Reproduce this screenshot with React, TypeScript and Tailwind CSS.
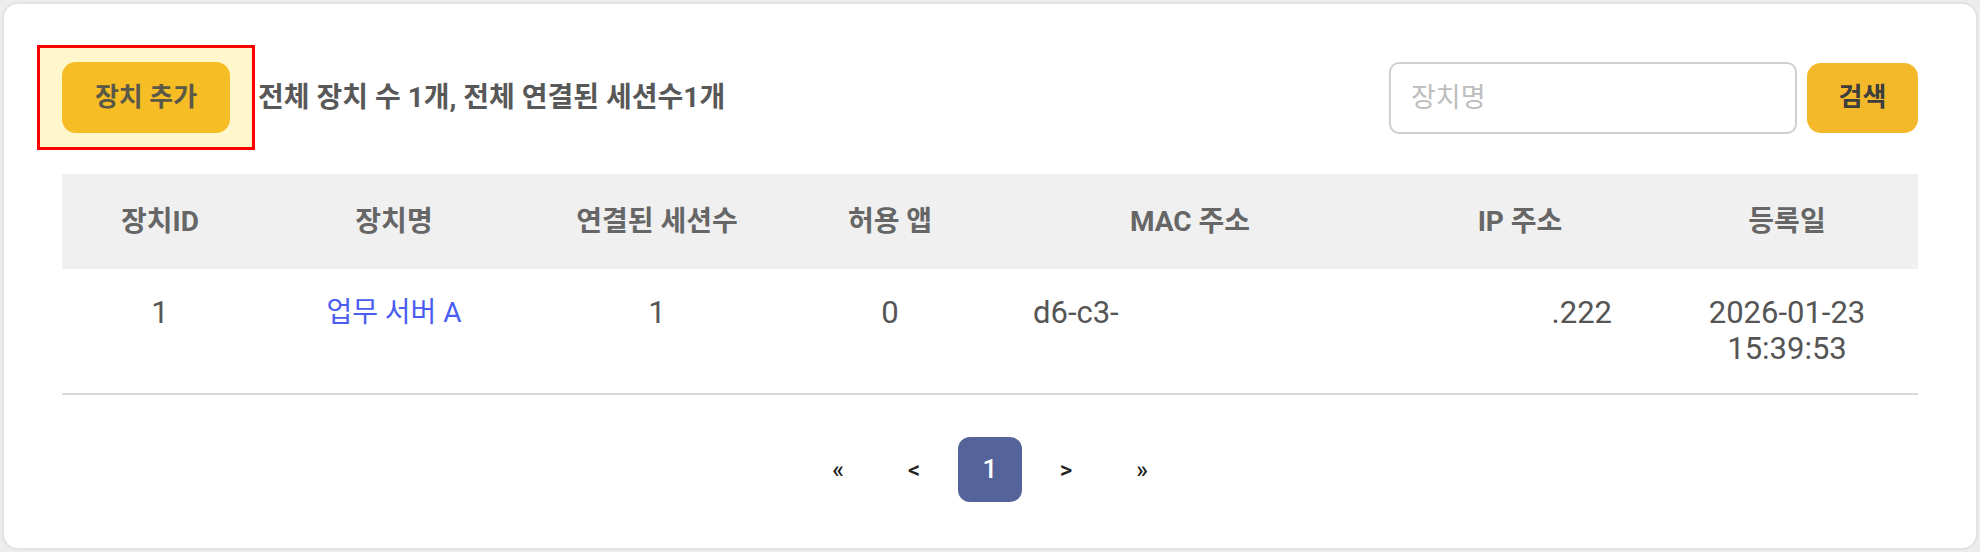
import React from 'react'

const columns = ['장치ID', '장치명', '연결된 세션수', '허용 앱', 'MAC 주소', 'IP 주소', '등록일']

const gridCols = 'grid grid-cols-[196px_272px_254px_212px_388px_272px_262px]'

export default function App() {
  return (
    <div className="min-h-screen bg-[#ececec] p-[2px] font-[Roboto,'Noto_Sans_CJK_KR',sans-serif]">
      <div className="rounded-[16px] border-2 border-[#e2e2e2] bg-white px-[58px] pt-[41px] pb-[46px]">
        {/* Toolbar */}
        <div className="flex h-[105px] items-center justify-between">
          <div className="flex items-center">
            <div className="relative">
              {/* highlight overlay */}
              <div className="absolute -top-[17px] -bottom-[17px] -left-[25px] -right-[25px] border-[3px] border-[#ff0000] bg-[#fff6cc]" />
              <button className="relative flex h-[71px] w-[168px] items-center justify-center rounded-[14px] bg-[#f6bd24] text-[26px] font-semibold text-[#5a5848]">
                장치 추가
              </button>
            </div>
            <span className="ml-[28px] text-[28px] font-bold text-[#585858]">
              전체 장치 수 1개, 전체 연결된 세션수1개
            </span>
          </div>
          <div className="flex items-center gap-[10px]">
            <input
              placeholder="장치명"
              className="h-[72px] w-[408px] rounded-[10px] border-2 border-[#cfcfcf] px-[20px] text-[27px] text-[#333] placeholder:text-[#bdbdbd] outline-none"
            />
            <button className="h-[70px] w-[111px] rounded-[14px] bg-[#f4b82b] text-[26px] font-bold text-[#3d3d3d]">
              검색
            </button>
          </div>
        </div>

        {/* Table */}
        <div className="mt-[24px]">
          <div className={`${gridCols} h-[95px] items-center bg-[#f0f0f0] text-center text-[28px] font-bold text-[#666]`}>
            {columns.map((c) => (
              <div key={c}>{c}</div>
            ))}
          </div>
          <div className={`${gridCols} items-start border-b-2 border-[#d9d9d9] py-[26px] text-[31px] leading-[36px] text-[#555]`}>
            <div className="text-center">1</div>
            <div className="text-center text-[28px] text-[#4a5df0]">업무 서버 A</div>
            <div className="text-center">1</div>
            <div className="text-center">0</div>
            <div className="pl-[37px]">d6-c3-</div>
            <div className="pr-[44px] text-right">.222</div>
            <div className="text-center">
              2026-01-23
              <br />
              15:39:53
            </div>
          </div>
        </div>

        {/* Pagination */}
        <div className="mt-[42px] flex items-center justify-center gap-[12px] text-[24px] font-medium text-[#222]">
          <button className="h-[65px] w-[64px]">«</button>
          <button className="h-[65px] w-[64px]">&lt;</button>
          <button className="h-[65px] w-[64px] rounded-[12px] bg-[#55639b] text-[26px] font-medium text-white">1</button>
          <button className="h-[65px] w-[64px]">&gt;</button>
          <button className="h-[65px] w-[64px]">»</button>
        </div>
      </div>
    </div>
  )
}
